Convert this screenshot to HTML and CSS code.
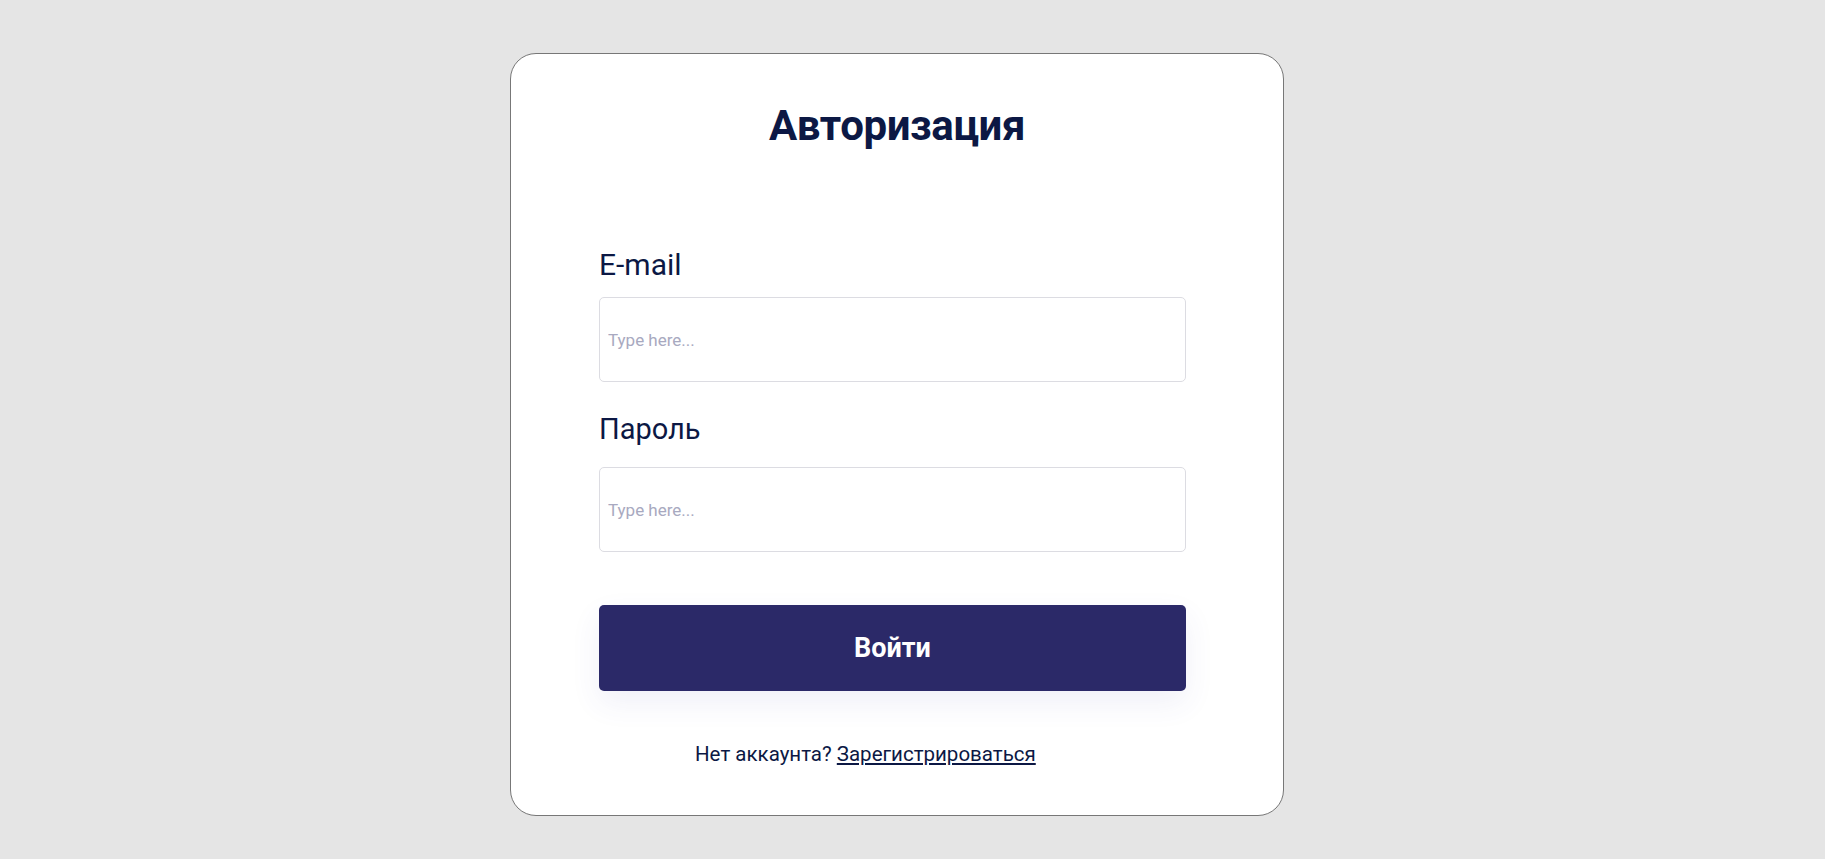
FILE: index.html
```html
<!DOCTYPE html>
<html lang="ru">
<head>
<meta charset="utf-8">
<title>Авторизация</title>
<link rel="stylesheet" href="styles.css">
</head>
<body>
<main class="page">
  <section class="card">
    <h1 class="title">Авторизация</h1>
    <form class="form">
      <label class="label label-email" for="email">E-mail</label>
      <input class="input" id="email" type="text" placeholder="Type here...">
      <label class="label label-pass" for="pass">Пароль</label>
      <input class="input" id="pass" type="password" placeholder="Type here...">
      <button class="btn" type="button">Войти</button>
      <p class="footer">Нет аккаунта? <a class="link" href="#">Зарегистрироваться</a></p>
    </form>
  </section>
</main>
</body>
</html>
```

FILE: styles.css
```css
* { box-sizing: border-box; }
html, body { margin: 0; padding: 0; }
body {
  background: #e5e5e5;
  font-family: Roboto, "Liberation Sans", sans-serif;
  color: #0c1844;
  height: 859px;
  overflow: hidden;
}
.page {
  display: flex;
  justify-content: center;
  padding: 53px 31px 0 0;
}
.card {
  width: 774px;
  height: 763px;
  background: #fff;
  border: 1px solid #777;
  border-radius: 26px;
  padding-top: 45px;
  display: flex;
  flex-direction: column;
}
.title {
  margin: 0;
  text-align: center;
  font-size: 42px;
  line-height: 54px;
  letter-spacing: -0.4px;
  font-weight: 700;
  color: #0c1844;
}
.form {
  display: flex;
  flex-direction: column;
  padding: 0 97px 0 88px;
}
.label {
  font-size: 30px;
  line-height: 36px;
  font-weight: 400;
  color: #0c1844;
}
.label-email { margin-top: 94px; margin-bottom: 14px; }
.label-pass { margin-top: 29px; margin-bottom: 20px; font-size: 29px; }
.input {
  height: 85px;
  width: 100%;
  border: 1px solid #dcdce2;
  border-radius: 5px;
  padding: 0 8px;
  font-family: inherit;
  font-size: 17px;
  color: #0c1844;
  outline: none;
}
.input::placeholder { color: #a8a9c0; }
.btn {
  margin-top: 53px;
  height: 86px;
  width: 100%;
  border: none;
  border-radius: 5px;
  background: #2b2968;
  color: #fff;
  font-family: inherit;
  font-size: 27px;
  font-weight: 700;
  box-shadow: 0 12px 30px rgba(60, 60, 160, 0.08);
  cursor: pointer;
}
.footer {
  margin: 51px 0 0;
  padding-left: 96px;
  font-size: 20.5px;
  line-height: 24px;
  color: #0c1844;
}
.link {
  color: #0c1844;
  text-decoration: underline;
}
```
